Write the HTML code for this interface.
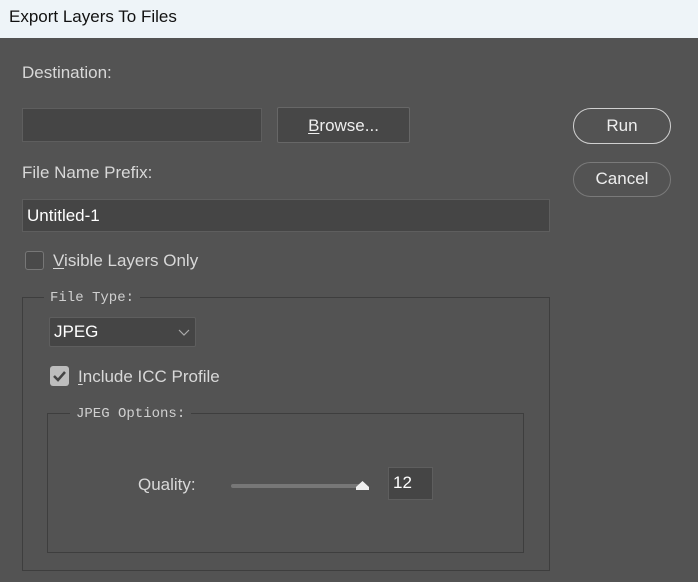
<!DOCTYPE html>
<html><head><style>
body{margin:0;width:698px;height:582px;background:#535353;position:relative;overflow:hidden;font-family:"Liberation Sans","Segoe UI",sans-serif;font-size:17px;color:#d8d8d8}
.a{position:absolute}
.title{left:0;top:0;width:698px;height:38px;background:#eef4f8;color:#111;font-size:17px}
.inp{background:#454545;border:1px solid #5e5e5e;box-sizing:border-box}
.mono{font-family:"Liberation Mono","DejaVu Sans Mono",monospace;font-size:14px;color:#d0d0d0;background:#535353;padding:0 6px}
.grp{border:1px solid #3e3e3e;box-sizing:border-box}
u{text-decoration:underline;text-underline-offset:2px}
</style></head><body>
<div class="a title"><span class="a" style="left:9px;top:7px">Export Layers To Files</span></div>
<div class="a" style="left:22px;top:63px">Destination:</div>
<div class="a inp" style="left:22px;top:108px;width:240px;height:34px"></div>
<div class="a" style="left:277px;top:107px;width:133px;height:36px;background:#474747;border:1px solid #676767;box-sizing:border-box;border-radius:2px;text-align:center;line-height:36px;color:#eee"><u>B</u>rowse...</div>
<div class="a" style="left:573px;top:108px;width:98px;height:36px;border:1.5px solid #d0d0d0;box-sizing:border-box;border-radius:18px;text-align:center;line-height:33px;color:#eee">Run</div>
<div class="a" style="left:573px;top:162px;width:98px;height:35px;border:1px solid #7a7a7a;box-sizing:border-box;border-radius:18px;text-align:center;line-height:32px;color:#eee">Cancel</div>
<div class="a" style="left:22px;top:163px">File Name Prefix:</div>
<div class="a inp" style="left:22px;top:199px;width:528px;height:33px;color:#fff;padding-left:4px;line-height:31px">Untitled-1</div>
<div class="a" style="left:25px;top:251px;width:19px;height:19px;border:1px solid #777;border-radius:3px;background:#4a4a4a;box-sizing:border-box"></div>
<div class="a" style="left:53px;top:251px"><u>V</u>isible Layers Only</div>
<div class="a grp" style="left:22px;top:297px;width:528px;height:274px"></div>
<div class="a mono" style="left:44px;top:290px">File Type:</div>
<div class="a inp" style="left:49px;top:317px;width:147px;height:30px;border-radius:2px;color:#fff;padding-left:4px;line-height:28px">JPEG
<svg class="a" style="left:128px;top:10px" width="12" height="8"><path d="M1 2l5 5 5-5" stroke="#aaa" fill="none" stroke-width="1.2"/></svg></div>
<div class="a" style="left:50px;top:366px;width:19px;height:20px;background:#bdbdbd;border-radius:3px"><svg width="19" height="20"><path d="M4 10l4 4 7-8" stroke="#444" stroke-width="2.5" fill="none"/></svg></div>
<div class="a" style="left:78px;top:367px"><u>I</u>nclude ICC Profile</div>
<div class="a grp" style="left:47px;top:413px;width:477px;height:140px"></div>
<div class="a mono" style="left:70px;top:406px">JPEG Options:</div>
<div class="a" style="left:138px;top:475px">Quality:</div>
<div class="a" style="left:231px;top:484px;width:132px;height:4px;background:#777;border-radius:2px"></div>
<svg class="a" style="left:355px;top:479px" width="15" height="12"><path d="M1 11V8L7.5 2 14 8v3z" fill="#f0f0f0"/></svg>
<div class="a inp" style="left:388px;top:467px;width:45px;height:33px;color:#fff;padding-left:4px;line-height:29px">12</div>
</body></html>
